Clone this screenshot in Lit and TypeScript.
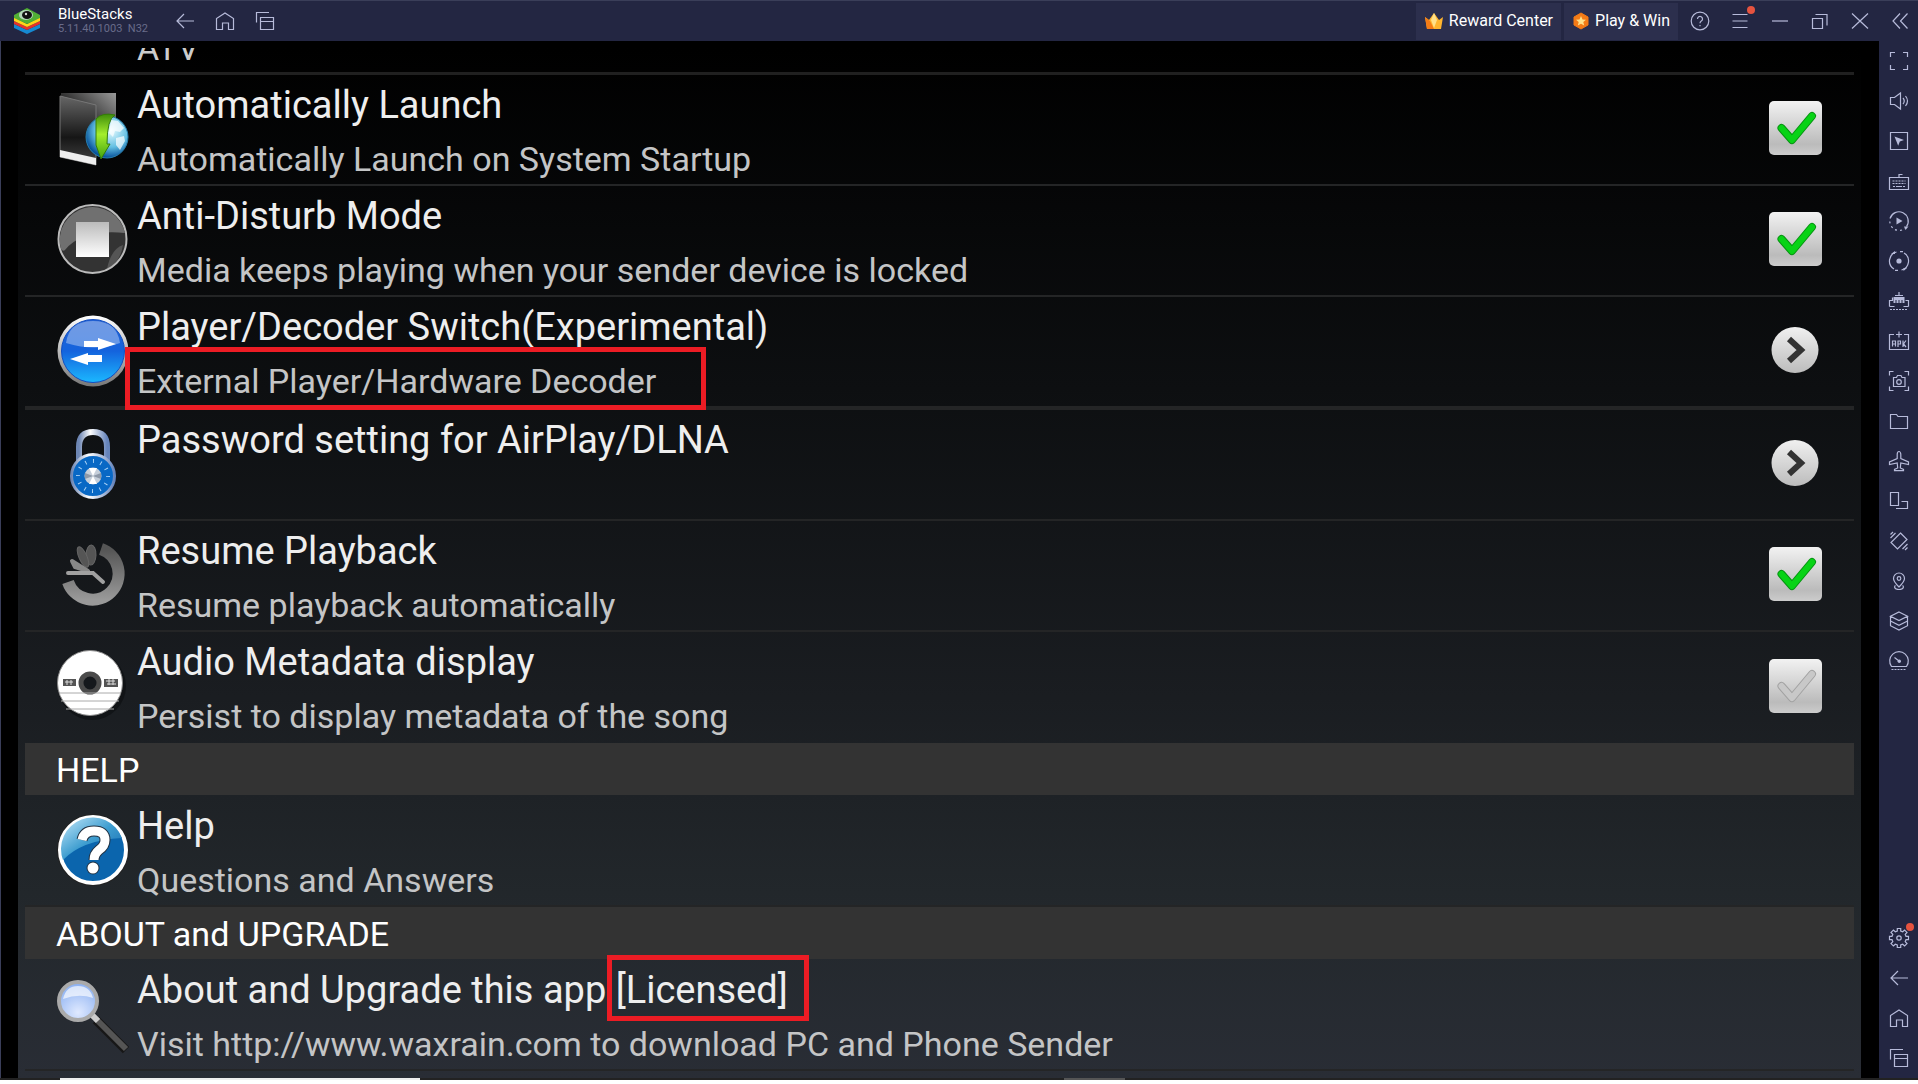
import { LitElement, html, svg, css, nothing } from "lit";
import { customElement, property } from "lit/decorators.js";

const paint = (body: unknown, size = 24) =>
  html`<svg class="glyph" width=${size} height=${size} viewBox="0 0 ${size} ${size}" aria-hidden="true">${body}</svg>`;

const glyphs: Record<string, unknown> = {
  back: svg`<path d="M21 12H4M11 5l-7 7 7 7"/>`,
  home: svg`<path d="M3.500 20.500V9.500L12 4l8.500 5.500v11h-5v-6.500h-6v6.500z"/>`,
  windows: svg`<path d="M7.500 8.500h13v12h-13zM7.500 12.500h13M3.500 13.500v-10H16"/>`,
  help: svg`<circle cx="12" cy="12" r="8.800"/><path d="M9.500 10a2.500 2.500 0 1 1 3.800 2.100c-.9.600-1.300 1-1.300 2.100"/><path d="M12 16v1.200"/>`,
  menu: svg`<path d="M4.500 5.500h15M4.500 12h15M4.500 18.500h15"/>`,
  minimise: svg`<path d="M4 12h16"/>`,
  restore: svg`<path d="M4.500 9.500h10v10h-10zM7.500 5.500h11.500v11"/>`,
  close: svg`<path d="M4 4.500l16 15M20 4.500l-16 15"/>`,
  collapse: svg`<path d="M12 4.500L5 12l7 7.500M19.500 4.500l-7 7.500 7 7.500"/>`,
  fullscreen: svg`<path d="M3.500 8V3.500H8M16 3.500h4.500V8M20.500 16v4.500H16M8 20.500H3.500V16"/>`,
  volume: svg`<path d="M3.500 8.500h4l6-4.500v16l-6-4.500h-4zM16 9q2.500 3 0 6M18.500 7q4 5 0 10"/>`,
  pointer: svg`<path d="M3.500 3.500h17v17h-17z"/><path class="solid" d="M7.500 7.500l9.500 3.500-4.200 1.500-1.600 4.300z"/>`,
  keyboard: svg`<path d="M2.500 8.500h19v12h-19zM12 8.500V5.500h3.500"/><path d="M5.500 12h13M5.500 14.500h13" stroke-dasharray="2 1"/><path d="M6 17.500h12" stroke-dasharray="2 1 6 1"/>`,
  macro: svg`<path d="M3 9.500a9.300 9.300 0 1 1 16.500 8"/><path d="M2.800 12.500a9.300 9.300 0 0 0 15 7" stroke-dasharray="2 3"/><path class="solid" d="M9.500 8.500l6 3.500-6 3.500z"/><path class="solid" d="M17 17.500h4.500l-3 3.500z"/>`,
  record: svg`<path d="M9.500 3A9.300 9.300 0 0 0 7 20M14.500 21A9.300 9.300 0 0 0 17 4"/><path d="M11 21.300H8M13 2.700h3"/><circle class="solid" cx="12" cy="12" r="2.600"/><path class="solid" d="M4 5h4V2zM16.500 19H20l-3.500 3z"/>`,
  memory: svg`<path d="M2.500 17.500v-6h3v-3M21.500 17.500v-6h-3M2.500 17.500h5M16.500 17.500h5M12 3v4M8 6.500h8"/><path class="solid" d="M6.500 8h11v6h-2v-3h-1v3h-2v-3h-1v3h-2v-3h-1v3h-2z"/><path d="M3 20.500h18" stroke-dasharray="2 1"/>`,
  apk: svg`<path d="M7 5.500H2.500v15h19v-15H17M12 2.500v6M9 5.500h6"/><path d="M5.500 17.500v-5.500h3v5.500M5.500 15h3M11 18v-6h2.500v3H11M16 11.500V18M19 11.500L16.500 15 19 18"/>`,
  camera: svg`<path d="M2.500 6.500v-4h4M17.500 2.500h4v4M21.500 17.500v4h-4M6.500 21.500h-4v-4M6.500 8.500h3l1-2h3.500l1 2h3v9h-11.500z"/><circle cx="12" cy="13" r="2.300"/>`,
  folder: svg`<path d="M3.500 5.500h6l1.500 2h9.500v12h-17z"/>`,
  plane: svg`<path d="M12 2.500c-1 0-1.800 1.500-1.800 3v4L2.500 13v2.500l7.700-1.500.5 5-3.200 1.500v1.200h9v-1.200l-3.200-1.500.5-5 7.700 1.500V13l-7.700-3.500v-4c0-1.500-.8-3-1.800-3z"/>`,
  screens: svg`<path d="M3.500 3.500h8v13h-8zM14.500 12.500h6v7H9"/>`,
  shake: svg`<path d="M13.500 4l6.500 6.500L10.500 20 4 13.500zM3.500 9l5-5M3.500 5.500L6 3M20.500 15l-5 5M20.500 18.500L18 21"/>`,
  location: svg`<path d="M12 18c-3-3-5.500-5.500-5.500-8.500a5.500 5.500 0 0 1 11 0c0 3-2.500 5.500-5.500 8.500zM8.500 16.500c-1.500.5-1.500 4 3.500 4s5-3.500 3.500-4"/><circle cx="12" cy="9.500" r="1.800"/>`,
  layers: svg`<path d="M12 3l8.500 4.300L12 11.500 3.500 7.300zM3.500 7.300v9.400L12 21l8.500-4.300V7.300M3.500 12l8.500 4.300 8.500-4.300"/>`,
  gauge: svg`<path d="M4.500 17.500a9.300 9.300 0 1 1 15 0zM7.500 8.500L12 12"/><circle class="solid" cx="12.300" cy="12.300" r="1.700"/><path d="M4.500 20.500h15" stroke-dasharray="2 1"/>`,
  gear: svg`<path d="M10.300 5V2.500h3.400V5l2 .8 1.900-1.800 2.400 2.400-1.800 1.900.8 2h2.500v3.400H19l-.8 2 1.800 1.900-2.400 2.400-1.900-1.800-2 .8v2.500h-3.400V19l-2-.8L6.400 20 4 17.600l1.800-1.900-.8-2H2.500v-3.400H5l.8-2L4 6.400 6.400 4l1.900 1.800z"/><circle cx="12" cy="12" r="2.200"/>`,
};

const art: Record<string, unknown> = {
  launch: svg`
    <defs>
      <linearGradient id="a" x1="0" y1="1" x2="1" y2="0"><stop offset="0" stop-color="#111"/><stop offset=".5" stop-color="#333"/><stop offset="1" stop-color="#999"/></linearGradient>
      <linearGradient id="b" x1="0" y1="0" x2="0" y2="1"><stop offset="0" stop-color="#666"/><stop offset=".6" stop-color="#161616"/><stop offset="1" stop-color="#444"/></linearGradient>
      <radialGradient id="c" cx=".6" cy=".35" r=".65"><stop offset="0" stop-color="#e6fbff"/><stop offset=".6" stop-color="#63bfe2"/><stop offset="1" stop-color="#06509a"/></radialGradient>
      <linearGradient id="d" x1="0" y1="0" x2="0" y2="1"><stop offset="0" stop-color="#3e8d0b"/><stop offset=".45" stop-color="#a4ee2d"/><stop offset="1" stop-color="#41a30d"/></linearGradient>
    </defs>
    <path d="M4 1h55v50H4z" fill="url(#a)"/>
    <path d="M3 4l36 9v60L3 65z" fill="url(#b)" stroke="#777"/>
    <path d="M3 58l36 8v7L3 65z" fill="#eee"/>
    <circle cx="50" cy="45" r="21" fill="url(#c)" stroke="#287fae"/>
    <path d="M54 28l7 1 6 7-4 4-5-1-2 6-4-4zM59 46l8-2 1 5-5 9-4-5z" fill="#fff" opacity=".7"/>
    <path d="M39 53V27Q45 20 58 23Q50 27 50 52h3L44 67z" fill="url(#d)" stroke="#347b09"/>`,
  stop: svg`
    <defs><linearGradient id="a" x1="0" y1="0" x2="0" y2="1"><stop offset="0" stop-color="#bbb"/><stop offset="1" stop-color="#fff"/></linearGradient></defs>
    <circle cx="35.500" cy="36" r="34" fill="#333" stroke="#bbb" stroke-width="2"/>
    <path d="M4 46A33 33 0 1 1 68 30Q25 26 8 47q-2 2-4-1z" fill="#707070"/>
    <path d="M50 66q13-6 16-24-12 4-16 24z" fill="#777" opacity=".5"/>
    <path d="M19 19h33v35H19z" fill="url(#a)"/>`,
  swap: svg`
    <defs><linearGradient id="a" x1="0" y1="0" x2="0" y2="1"><stop offset="0" stop-color="#2463d5"/><stop offset=".5" stop-color="#1463dd"/><stop offset="1" stop-color="#1bb8ff"/></linearGradient>
    <linearGradient id="b" x1="0" y1="0" x2="0" y2="1"><stop offset="0" stop-color="#fff"/><stop offset="1" stop-color="#777"/></linearGradient></defs>
    <circle cx="36" cy="37" r="35.500" fill="url(#b)"/><circle cx="36" cy="37" r="31.500" fill="url(#a)" stroke="#124ec1"/>
    <path d="M9 29Q12 7 36 7t27 22q-24 9-54 0z" fill="#fff" opacity=".35"/>
    <path d="M27 27h14v-3l18 6-18 6v-3H27zM45 41v7H31v3l-18-6 18-6v2z" fill="#fff"/>`,
  lock: svg`
    <defs><linearGradient id="a"><stop offset="0" stop-color="#6d86b4"/><stop offset=".4" stop-color="#fff"/><stop offset="1" stop-color="#6684bb"/></linearGradient></defs>
    <path d="M22 34V20q0-15 14-15t14 15v14" fill="none" stroke="url(#a)" stroke-width="6"/>
    <circle cx="36" cy="49" r="21.500" fill="#0868c5" stroke="url(#a)" stroke-width="3"/>
    <circle cx="36" cy="49" r="15" fill="none" stroke="#a9d1f5" stroke-width="4" stroke-dasharray="1 6.800"/>
    <circle cx="36" cy="49" r="8.500" fill="#c5ced9"/><path d="M36 49l-4-8h8zM36 49l-4 8h8z" fill="#fff"/><path d="M36 49l8-3v6zM36 49l-8-3v6z" fill="#8d98a7"/>`,
  resume: svg`
    <defs><linearGradient id="a" x1="0" y1="0" x2="0" y2="1"><stop offset="0" stop-color="#555"/><stop offset="1" stop-color="#999"/></linearGradient></defs>
    <path d="M44 11A26 26 0 1 1 11 44" fill="none" stroke="url(#a)" stroke-width="12"/>
    <g fill="#555" stroke="#666"><ellipse cx="34" cy="17" rx="5" ry="10" transform="rotate(2 34 17)"/><ellipse cx="26" cy="19" rx="4" ry="11" transform="rotate(-24 26 19)"/></g>
    <path d="M15 23l16 10-13-4z" fill="#888" stroke="#888" stroke-width="4" stroke-linejoin="round"/>
    <path d="M11 35h25l10 9" fill="none" stroke="#a0a0a0" stroke-width="4" stroke-linecap="round"/>`,
  disc: svg`
    <circle cx="35" cy="37" r="34" fill="#080a0c" opacity=".5"/><circle cx="33" cy="34" r="32.500" fill="#fff" stroke="#888"/>
    <circle cx="33" cy="34" r="9" fill="#15181c" stroke="#4b4b4b" stroke-width="5"/>
    <path d="M6 30h13v7H6zM47 30h14v8H47z" fill="#555"/><path d="M8 33h8M10 31v5M14 31v5M49 32h9M50 35h9M52 30v6M56 30v6" stroke="#ddd"/>
    <path d="M2 44h62M4 52h58M9 60h48" stroke="#aaa"/>`,
  question: svg`
    <defs><linearGradient id="a" x1="0" y1="0" x2="1" y2="1"><stop offset="0" stop-color="#c5e9fb"/><stop offset=".5" stop-color="#3f9ed0"/><stop offset="1" stop-color="#1268af"/></linearGradient></defs>
    <circle cx="36" cy="36" r="36" fill="#222"/><circle cx="36" cy="36" r="33" fill="#0b65ad" stroke="#fff" stroke-width="4"/>
    <path d="M6 46A31 31 0 0 1 65 24Q25 26 6 46z" fill="url(#a)"/>
    <path d="M25 26q2-9 12-9 11 0 11 9 0 6-6 10-5 4-5 10" fill="none" stroke="#234" stroke-width="11"/><circle cx="36" cy="54" r="6.500" fill="#234"/>
    <path d="M25 26q2-9 12-9 11 0 11 9 0 6-6 10-5 4-5 10" fill="none" stroke="#fff" stroke-width="9"/><circle cx="36" cy="54" r="5.500" fill="#fff"/>`,
  magnifier: svg`
    <defs><radialGradient id="a" cx=".5" cy=".8" r=".8"><stop offset="0" stop-color="#dfe9ff"/><stop offset="1" stop-color="#88aef0"/></radialGradient></defs>
    <path d="M39 42l30 30" stroke="#171717" stroke-width="9"/><path d="M39 41l30 30" stroke="#555" stroke-width="6"/>
    <path d="M34 36l7 7" stroke="#ccc" stroke-width="6"/>
    <circle cx="21" cy="23" r="19" fill="url(#a)" stroke="#aaa" stroke-width="4"/>
    <path d="M6 21Q9 8 21 8t15 12q-14-5-30 1z" fill="#fff" opacity=".65"/>`,
};

@customElement("tool-button")
class ToolButton extends LitElement {
  @property() icon = "";
  @property() label = "";
  @property({ type: Boolean }) dot = false;
  static styles = css`
    :host { display: block; }
    button { display: flex; position: relative; padding: 0; border: 0; background: none; color: #b7bbda; }
    .glyph { fill: none; stroke: currentColor; stroke-width: 1.2; }
    .solid { fill: currentColor; stroke: none; }
    .dot { position: absolute; top: -3px; right: -3px; width: 8px; height: 8px; border-radius: 50%; background: #e6533f; }
  `;
  render() {
    return html`<button aria-label=${this.label}>${paint(glyphs[this.icon])}${this.dot ? html`<span class="dot"></span>` : nothing}</button>`;
  }
}

@customElement("item-art")
class ItemArt extends LitElement {
  @property() name = "";
  static styles = css`:host { display: block; } svg { display: block; }`;
  render() {
    return html`<svg width="72" height="76" viewBox="0 0 72 76" aria-hidden="true">${art[this.name]}</svg>`;
  }
}

interface Setting {
  art: string;
  title: string;
  tag?: string;
  note: string;
  marked?: boolean;
  control?: "on" | "off" | "open";
  edge?: "thick" | "none" | "tall";
}

const settings: Setting[] = [
  { art: "launch", title: "Automatically Launch", note: "Automatically Launch on System Startup", control: "on" },
  { art: "stop", title: "Anti-Disturb Mode", note: "Media keeps playing when your sender device is locked", control: "on" },
  { art: "swap", title: "Player/Decoder Switch(Experimental)", note: "External Player/Hardware Decoder", marked: true, control: "open", edge: "thick" },
  { art: "lock", title: "Password setting for AirPlay/DLNA", note: "", control: "open" },
  { art: "resume", title: "Resume Playback", note: "Resume playback automatically", control: "on" },
  { art: "disc", title: "Audio Metadata display", note: "Persist to display metadata of the song", control: "off", edge: "none" },
];
const helpItem: Setting = { art: "question", title: "Help", note: "Questions and Answers", edge: "tall" };
const aboutItem: Setting = { art: "magnifier", title: "About and Upgrade this app", tag: "[Licensed]", note: "Visit http://www.waxrain.com to download PC and Phone Sender", edge: "tall" };

const sideTools = [
  ["fullscreen", "Full screen"], ["volume", "Volume"], ["pointer", "Lock cursor"], ["keyboard", "Game controls"],
  ["macro", "Macro playback"], ["record", "Macro recorder"], ["memory", "Trim memory"], ["apk", "Install APK"],
  ["camera", "Screenshot"], ["folder", "Media folder"], ["plane", "Airplane"], ["screens", "Rotate"],
  ["shake", "Shake"], ["location", "Location"], ["layers", "Instances"], ["gauge", "Performance"],
];

@customElement("app-root")
class AppRoot extends LitElement {
  static styles = css`
    :host { display: block; font-family: Roboto, "Liberation Sans", sans-serif; }
    * { box-sizing: border-box; }
    .window { display: flex; flex-direction: column; height: 100vh; background: #fff; overflow: hidden; padding-bottom: 4px; }
    .bar { flex: none; height: 41px; display: flex; align-items: center; background: #232642; border-top: 1px solid #3a3e59; padding: 0 6px 0 12px; }
    .brand { display: flex; align-items: center; gap: 16px; width: 161px; color: #fff; font-size: 15px; line-height: 16px; }
    .version { display: block; color: #696c8a; font-size: 11px; line-height: 14px; white-space: pre; }
    .nav { display: flex; gap: 16px; flex: 1; }
    .promo { display: flex; align-items: center; gap: 5px; height: 37px; margin-right: 3px; padding: 0 8px; border: 0; background: #2c2f4d; color: #fff; font: 16px/20px Roboto, sans-serif; }
    .controls { display: flex; gap: 16px; margin-left: 7px; }
    .middle { flex: 1; min-height: 0; display: flex; border-left: 1px solid #3a3e59; background: #000; }
    .screen { flex: 1; min-width: 0; padding: 7px 18px 0 17px; overflow: hidden; }
    .pane { height: 100%; overflow: hidden; padding: 0 7px; background: linear-gradient(#000, #0d0f11 33%, #1a1d21 63%, #22272b 82%, #292d35); color: #eee; }
    .cut { height: 27px; display: flex; align-items: flex-end; padding: 0 0 4px 112px; border-bottom: 3px solid #202020; overflow: hidden; font-size: 34px; line-height: 40px; color: #ccc; }
    .row { display: flex; height: 111px; border-bottom: 2px solid #242526; padding-left: 32px; }
    .thick { height: 113px; border-bottom-width: 4px; }
    .none { border-bottom: 0; }
    .tall { height: 112px; }
    .art { width: 80px; padding-top: 17px; }
    .tall .art { padding-top: 19px; }
    .words { flex: 1; padding-top: 7px; }
    .tall .words { padding-top: 8px; }
    .title { margin: 0; font-size: 38px; line-height: 46px; font-weight: 400; white-space: nowrap; }
    .note { margin: 0; padding-top: 5px; font-size: 34px; line-height: 52px; color: #c4c5c6; white-space: nowrap; }
    .mark { position: relative; }
    .mark::after { content: ""; position: absolute; inset: -14px -50px -9px -12px; border: 5px solid #ec1c24; }
    .tag::after { inset: -13px -21px -9px -9px; }
    .action { display: flex; align-items: center; justify-content: center; width: 54px; margin: 0 32px 3px 0; }
    .check { appearance: none; margin: 0; width: 53px; height: 54px; border-radius: 5px; background: linear-gradient(#f2f2f2, #bbb 80%, #ccc); }
    .box { display: grid; }
    .box > * { grid-area: 1 / 1; }
    .box svg { pointer-events: none; }
    .open { border: 0; background: none; padding: 0; display: flex; }
    .section { height: 52px; margin: 0; padding-left: 31px; background: #333; color: #fff; font-size: 34px; line-height: 54px; font-weight: 400; }
    .side { flex: none; width: 39px; background: #232642; display: flex; flex-direction: column; align-items: center; gap: 16px; padding: 8px 0 8px; }
    .gap { flex: 1; }
    .strip { flex: none; height: 2px; display: flex; gap: 644px; padding-left: 60px; background: #222; }
    .strip i { width: 360px; background: #eee; }
    .strip b { width: 61px; background: #555; }
  `;

  control(item: Setting) {
    if (!item.control) return nothing;
    if (item.control === "open")
      return html`<div class="action"><button class="open" aria-label=${item.title}>
        <svg width="48" height="48" viewBox="0 0 48 48"><defs><linearGradient id="k" x1="0" y1="0" x2="0" y2="1"><stop offset="0" stop-color="#f0f0f0"/><stop offset="1" stop-color="#bcbcbc"/></linearGradient></defs>
        <ellipse cx="24" cy="24" rx="23.500" ry="23" fill="url(#k)"/><path d="M18 13l12 11-12 11" fill="none" stroke="#333" stroke-width="6"/></svg></button></div>`;
    const on = item.control === "on";
    return html`<div class="action"><div class="box"><input class="check" type="checkbox" aria-label=${item.title} .checked=${on} />
      <svg width="53" height="54" viewBox="0 0 53 54"><path d="M12.500 27l10.500 12 20-24" fill="none" stroke=${on ? "#079312" : "#a2a2a2"} stroke-width="8" stroke-linecap="round" stroke-linejoin="round"/>
      <path d="M12.500 27l10.500 12 20-24" fill="none" stroke=${on ? "#08d316" : "#c8c8c8"} stroke-width="6" stroke-linecap="round" stroke-linejoin="round"/></svg></div></div>`;
  }

  row(item: Setting) {
    return html`<section class="row ${item.edge ?? ""}">
      <div class="art"><item-art name=${item.art}></item-art></div>
      <div class="words">
        <h3 class="title">${item.title} ${item.tag ? html`<span class="mark tag">${item.tag}</span>` : nothing}</h3>
        <p class="note">${item.marked ? html`<span class="mark">${item.note}</span>` : item.note}</p>
      </div>
      ${this.control(item)}
    </section>`;
  }

  render() {
    return html`<div class="window">
      <header class="bar">
        <div class="brand">
          <svg width="30" height="28" viewBox="0 0 30 28" aria-hidden="true">
            <path d="M2 17l13 6 13-6v4l-13 6-13-6z" fill="#1689d1"/><path d="M2 14l13 6 13-6v3l-13 6-13-6z" fill="#e5322e"/><path d="M2 10l13 7 13-7v4l-13 6-13-6z" fill="#ffd31a"/>
            <path d="M2 8L15 1l13 7v3l-13 6-13-6z" fill="#51af35"/><ellipse cx="14" cy="8" rx="7" ry="5" fill="#b3d5b9"/><ellipse cx="15" cy="8" rx="5" ry="4" fill="#111"/><circle cx="14" cy="7" r="1.200" fill="#ddd"/>
          </svg>
          <span>BlueStacks<span class="version">5.11.40.1003  N32</span></span>
        </div>
        <nav class="nav">
          <tool-button icon="back" label="Back"></tool-button><tool-button icon="home" label="Home"></tool-button><tool-button icon="windows" label="Recent apps"></tool-button>
        </nav>
        <button class="promo"><svg width="20" height="18" viewBox="0 0 20 18"><path d="M1 5l4 3 5-7 5 7 4-3-2 12H3z" fill="#ffb52e"/><path d="M1 5l5 4 4 8H3z" fill="#f47b16"/><path d="M10 1l3 7-3 8-3-8z" fill="#ffe18a"/></svg>Reward Center</button>
        <button class="promo"><svg width="18" height="18" viewBox="0 0 18 18"><path d="M9 1l7 4v8l-7 4-7-4V5z" fill="#f47b16" stroke="#f47b16" stroke-linejoin="round"/><path d="M9 4l1.500 3.500 3.500.3-2.700 2.300.9 3.500L9 11.800l-3.200 1.800.9-3.500L4 7.800l3.500-.3z" fill="#ffe18a"/></svg>Play &amp; Win</button>
        <div class="controls">
          <tool-button icon="help" label="Help"></tool-button><tool-button icon="menu" label="Menu" dot></tool-button><tool-button icon="minimise" label="Minimise"></tool-button>
          <tool-button icon="restore" label="Restore"></tool-button><tool-button icon="close" label="Close"></tool-button><tool-button icon="collapse" label="Collapse sidebar"></tool-button>
        </div>
      </header>
      <div class="middle">
        <main class="screen"><div class="pane">
          <div class="cut">ATV</div>
          ${settings.map((s) => this.row(s))}
          <h2 class="section">HELP</h2>
          ${this.row(helpItem)}
          <h2 class="section">ABOUT and UPGRADE</h2>
          ${this.row(aboutItem)}
        </div></main>
        <aside class="side">
          ${sideTools.map(([i, l]) => html`<tool-button icon=${i} label=${l}></tool-button>`)}
          <div class="gap"></div>
          <tool-button icon="gear" label="Settings" dot></tool-button><tool-button icon="back" label="Back"></tool-button>
          <tool-button icon="home" label="Home"></tool-button><tool-button icon="windows" label="Recent apps"></tool-button>
        </aside>
      </div>
      <footer class="strip"><i></i><b></b></footer>
    </div>`;
  }
}
